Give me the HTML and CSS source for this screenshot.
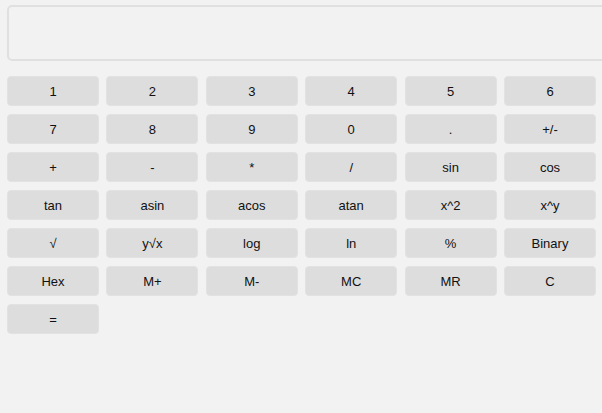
FILE: index.html
```html
<!DOCTYPE html>
<html>
<head>
<meta charset="utf-8">
<link rel="stylesheet" href="styles.css">
</head>
<body>
<div class="calc">
  <input class="display" type="text">
  <div class="keys">
    <button class="key">1</button>
    <button class="key">2</button>
    <button class="key">3</button>
    <button class="key">4</button>
    <button class="key">5</button>
    <button class="key">6</button>
    <button class="key">7</button>
    <button class="key">8</button>
    <button class="key">9</button>
    <button class="key">0</button>
    <button class="key">.</button>
    <button class="key">+/-</button>
    <button class="key">+</button>
    <button class="key">-</button>
    <button class="key">*</button>
    <button class="key">/</button>
    <button class="key">sin</button>
    <button class="key">cos</button>
    <button class="key">tan</button>
    <button class="key">asin</button>
    <button class="key">acos</button>
    <button class="key">atan</button>
    <button class="key">x^2</button>
    <button class="key">x^y</button>
    <button class="key">√</button>
    <button class="key">y√x</button>
    <button class="key">log</button>
    <button class="key">ln</button>
    <button class="key">%</button>
    <button class="key">Binary</button>
    <button class="key">Hex</button>
    <button class="key">M+</button>
    <button class="key">M-</button>
    <button class="key">MC</button>
    <button class="key">MR</button>
    <button class="key">C</button>
    <button class="key">=</button>
  </div>
</div>
</body>
</html>
```

FILE: styles.css
```css
html, body {
  margin: 0;
  padding: 0;
  background: #f2f2f2;
  overflow: hidden;
}
body {
  font-family: "Liberation Sans", Arial, sans-serif;
}
.calc {
  padding: 5px 6px 0 7px;
}
.display {
  display: block;
  box-sizing: border-box;
  width: 610px;
  height: 56px;
  margin: 0 0 15px 0;
  background: #f2f2f2;
  border: 2px solid #e0e0e0;
  border-radius: 5px;
  outline: none;
  padding: 0 10px;
  font-family: inherit;
  font-size: 20px;
}
.keys {
  display: grid;
  grid-template-columns: repeat(6, 1fr);
  column-gap: 7.4px;
  row-gap: 8px;
}
.key {
  box-sizing: border-box;
  height: 30px;
  margin: 0;
  padding: 0;
  border: 1px solid #e2e2e2;
  border-radius: 4px;
  background: #dddddd;
  color: #111;
  font-family: inherit;
  font-size: 13px;
  text-align: center;
}
```
